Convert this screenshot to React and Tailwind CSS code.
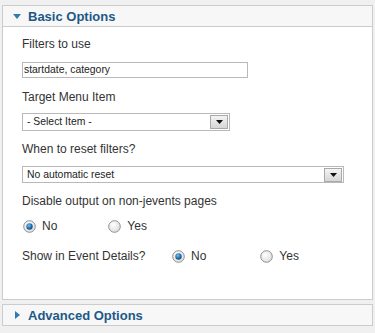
import React from "react";

const F = { fontFamily: '"Liberation Sans", Arial, sans-serif' };

function Radio({ checked }) {
  return (
    <svg width="13" height="13" viewBox="0 0 13 13" className="shrink-0">
      <defs>
        <radialGradient id="rb" cx="0.4" cy="0.35" r="0.7">
          <stop offset="0" stopColor="#ffffff" />
          <stop offset="1" stopColor="#dcdcdc" />
        </radialGradient>
        <radialGradient id="rd" cx="0.4" cy="0.35" r="0.7">
          <stop offset="0" stopColor="#7fc0ea" />
          <stop offset="0.6" stopColor="#1f6fab" />
          <stop offset="1" stopColor="#0f4e80" />
        </radialGradient>
      </defs>
      <circle cx="6.5" cy="6.5" r="5.8" fill="url(#rb)" stroke="#8f8f8f" strokeWidth="1" />
      {checked && <circle cx="6.5" cy="6.5" r="3.2" fill="url(#rd)" />}
    </svg>
  );
}

function DropBtn() {
  return (
    <div className="w-[18px] h-[14px] mr-[1px] border border-[#a9a9a9] bg-gradient-to-b from-[#f4f4f4] to-[#d6d6d6] flex items-center justify-center">
      <svg width="7" height="4" viewBox="0 0 7 4">
        <path d="M0 0 H7 L3.5 4 Z" fill="#111" />
      </svg>
    </div>
  );
}

export default function App() {
  return (
    <div className="w-[375px] h-[333px] bg-[#f0f0f0] pt-[5px] pl-[2px]" style={F}>
      <div className="w-[371px] border border-[#cccccc] bg-white">
        <div className="h-[21px] bg-[#f7f7f7] border-b border-[#cccccc] flex items-center pl-[10px]">
          <svg width="8" height="5" viewBox="0 0 8 5" className="mr-[7px]">
            <path d="M0 0 H8 L4 5 Z" fill="#2b7cb5" />
          </svg>
          <span className="text-[13px] font-bold text-[#1d5987] leading-none">Basic Options</span>
        </div>
        <div className="h-[272px] pl-[19px] pt-[10px] flex flex-col items-start text-[#333333]">
          <div className="text-[12px] leading-[14px]">Filters to use</div>
          <div className="mt-[11px] w-[226px] h-[16px] border border-[#b9b9b9] flex items-center pl-[1px] text-[10.4px] text-[#222]">
            startdate, category
          </div>
          <div className="mt-[12px] text-[12px] leading-[14px]">Target Menu Item</div>
          <div className="mt-[9px] w-[208px] h-[18px] border border-[#b9b9b9] flex items-center justify-between pl-[4px] text-[10.4px] text-[#222]">
            <span>- Select Item -</span>
            <DropBtn />
          </div>
          <div className="mt-[11px] text-[12px] leading-[14px]">When to reset filters?</div>
          <div className="mt-[10px] w-[322px] h-[17px] border border-[#b9b9b9] flex items-center justify-between pl-[4px] text-[10.4px] text-[#222]">
            <span>No automatic reset</span>
            <DropBtn />
          </div>
          <div className="mt-[11px] text-[12px] leading-[14px]">Disable output on non-jevents pages</div>
          <div className="mt-[11px] h-[14px] flex items-center text-[12px]">
            <div className="ml-[1px]"><Radio checked /></div>
            <span className="ml-[6px]">No</span>
            <div className="ml-[51px]"><Radio /></div>
            <span className="ml-[6px]">Yes</span>
          </div>
          <div className="mt-[16px] h-[14px] flex items-center text-[12px]">
            <span className="w-[150px]">Show in Event Details?</span>
            <Radio checked />
            <span className="ml-[6px]">No</span>
            <div className="ml-[54px]"><Radio /></div>
            <span className="ml-[6px]">Yes</span>
          </div>
        </div>
      </div>
      <div className="mt-[4px] w-[371px] h-[22px] border border-[#cccccc] bg-[#f7f7f7] flex items-center pl-[12px]">
        <svg width="5" height="8" viewBox="0 0 5 8" className="mr-[8px]">
          <path d="M0 0 L5 4 L0 8 Z" fill="#2b7cb5" />
        </svg>
        <span className="text-[13px] font-bold text-[#1d5987] leading-none">Advanced Options</span>
      </div>
    </div>
  );
}
